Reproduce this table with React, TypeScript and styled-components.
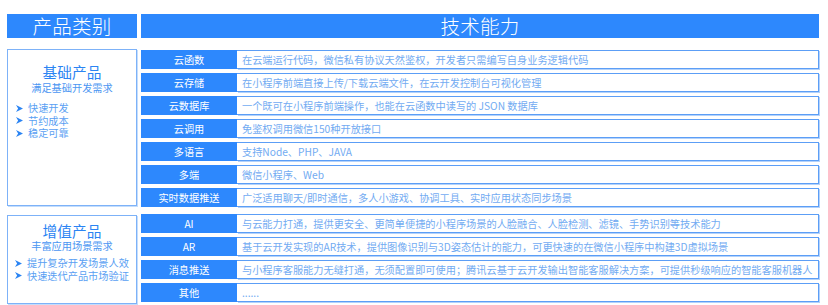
import React from "react";
import styled, { createGlobalStyle } from "styled-components";

const Global = createGlobalStyle`
  html, body { margin: 0; padding: 0; background: #ffffff; }
  body { font-family: "Noto Sans CJK SC", "Noto Sans", sans-serif; }
`;

const Page = styled.div`
  display: grid;
  grid-template-columns: 130px 678px;
  column-gap: 4px;
  padding: 14px 0 0 7px;
  width: 828px;
  height: 305px;
  box-sizing: border-box;
`;

const HeaderCell = styled.div`
  height: 24px;
  background: #2d88fd;
  color: #ffffff;
  font-size: 19.5px;
  font-weight: 300;
  line-height: 24px;
  text-align: center;
  letter-spacing: 0.3px;
  margin-bottom: 10px;
`;

const Panel = styled.div<{ $top: number; $height: number; $pad: number }>`
  margin-top: ${(p) => p.$top}px;
  height: ${(p) => p.$height}px;
  box-sizing: border-box;
  border: 1px solid #7db2f8;
  box-shadow: 1px 1px 0 #c4ddfc;
  display: flex;
  flex-direction: column;
  align-items: center;
  padding-top: ${(p) => p.$pad}px;
`;

const PanelTitle = styled.div`
  font-size: 14.7px;
  color: #2b84f3;
  line-height: 18px;
`;

const PanelSub = styled.div<{ $lh: number; $mb: number }>`
  font-size: 10.2px;
  color: #4b96f2;
  line-height: ${(p) => p.$lh}px;
  margin-bottom: ${(p) => p.$mb}px;
`;

const BulletList = styled.ul<{ $indent: number }>`
  list-style: none;
  margin: 0;
  padding: 0 0 0 ${(p) => p.$indent}px;
  align-self: stretch;
`;

const Bullet = styled.li`
  font-size: 10.2px;
  color: #5a9ff3;
  line-height: 12.5px;
  height: 12.5px;
  display: flex;
  align-items: center;
  gap: 5px;
  white-space: nowrap;
`;

const Arrow = styled.svg`
  width: 7px;
  height: 7px;
  flex: none;
`;

const RowList = styled.div<{ $top: number }>`
  margin-top: ${(p) => p.$top}px;
  display: flex;
  flex-direction: column;
  gap: 4px;
`;

const Row = styled.div`
  display: flex;
  height: 19px;
`;

const Label = styled.div`
  width: 96px;
  flex: none;
  background: #2d88fd;
  color: #ffffff;
  font-size: 10.2px;
  line-height: 19px;
  text-align: center;
`;

const Desc = styled.div`
  flex: 1;
  box-sizing: border-box;
  border: 1px solid #5c9ef6;
  border-left: none;
  box-shadow: 1px 1px 0 #b3d2fb;
  color: #72abf2;
  font-size: 10.2px;
  line-height: 17px;
  padding-left: 5px;
  white-space: nowrap;
  overflow: hidden;
`;

const ArrowIcon = () => (
  <Arrow viewBox="0 0 10 10">
    <path d="M0 0 L10 5 L0 10 L3 5 Z" fill="#2b84f3" />
  </Arrow>
);

const groupA = [
  ["云函数", "在云端运行代码，微信私有协议天然鉴权，开发者只需编写自身业务逻辑代码"],
  ["云存储", "在小程序前端直接上传/下载云端文件，在云开发控制台可视化管理"],
  ["云数据库", "一个既可在小程序前端操作，也能在云函数中读写的 JSON 数据库"],
  ["云调用", "免鉴权调用微信150种开放接口"],
  ["多语言", "支持Node、PHP、JAVA"],
  ["多端", "微信小程序、Web"],
  ["实时数据推送", "广泛适用聊天/即时通信，多人小游戏、协调工具、实时应用状态同步场景"],
];

const groupB = [
  ["AI", "与云能力打通，提供更安全、更简单便捷的小程序场景的人脸融合、人脸检测、滤镜、手势识别等技术能力"],
  ["AR", "基于云开发实现的AR技术，提供图像识别与3D姿态估计的能力，可更快速的在微信小程序中构建3D虚拟场景"],
  ["消息推送", "与小程序客服能力无缝打通，无须配置即可使用；腾讯云基于云开发输出智能客服解决方案，可提供秒级响应的智能客服机器人"],
  ["其他", "......"],
];

export default function App() {
  return (
    <>
      <Global />
      <Page>
        <HeaderCell>产品类别</HeaderCell>
        <HeaderCell>技术能力</HeaderCell>

        <Panel $top={0} $height={157} $pad={13}>
          <PanelTitle>基础产品</PanelTitle>
          <PanelSub $lh={14} $mb={7}>满足基础开发需求</PanelSub>
          <BulletList $indent={8}>
            {["快速开发", "节约成本", "稳定可靠"].map((t) => (
              <Bullet key={t}>
                <ArrowIcon />
                {t}
              </Bullet>
            ))}
          </BulletList>
        </Panel>
        <RowList $top={1}>
          {groupA.map(([l, d]) => (
            <Row key={l}>
              <Label>{l}</Label>
              <Desc>{d}</Desc>
            </Row>
          ))}
        </RowList>

        <Panel $top={7} $height={89} $pad={6}>
          <PanelTitle>增值产品</PanelTitle>
          <PanelSub $lh={12} $mb={5}>丰富应用场景需求</PanelSub>
          <BulletList $indent={7}>
            {["提升复杂开发场景人效", "快速迭代产品市场验证"].map((t) => (
              <Bullet key={t}>
                <ArrowIcon />
                {t}
              </Bullet>
            ))}
          </BulletList>
        </Panel>
        <RowList $top={6}>
          {groupB.map(([l, d]) => (
            <Row key={l}>
              <Label>{l}</Label>
              <Desc>{d}</Desc>
            </Row>
          ))}
        </RowList>
      </Page>
    </>
  );
}
